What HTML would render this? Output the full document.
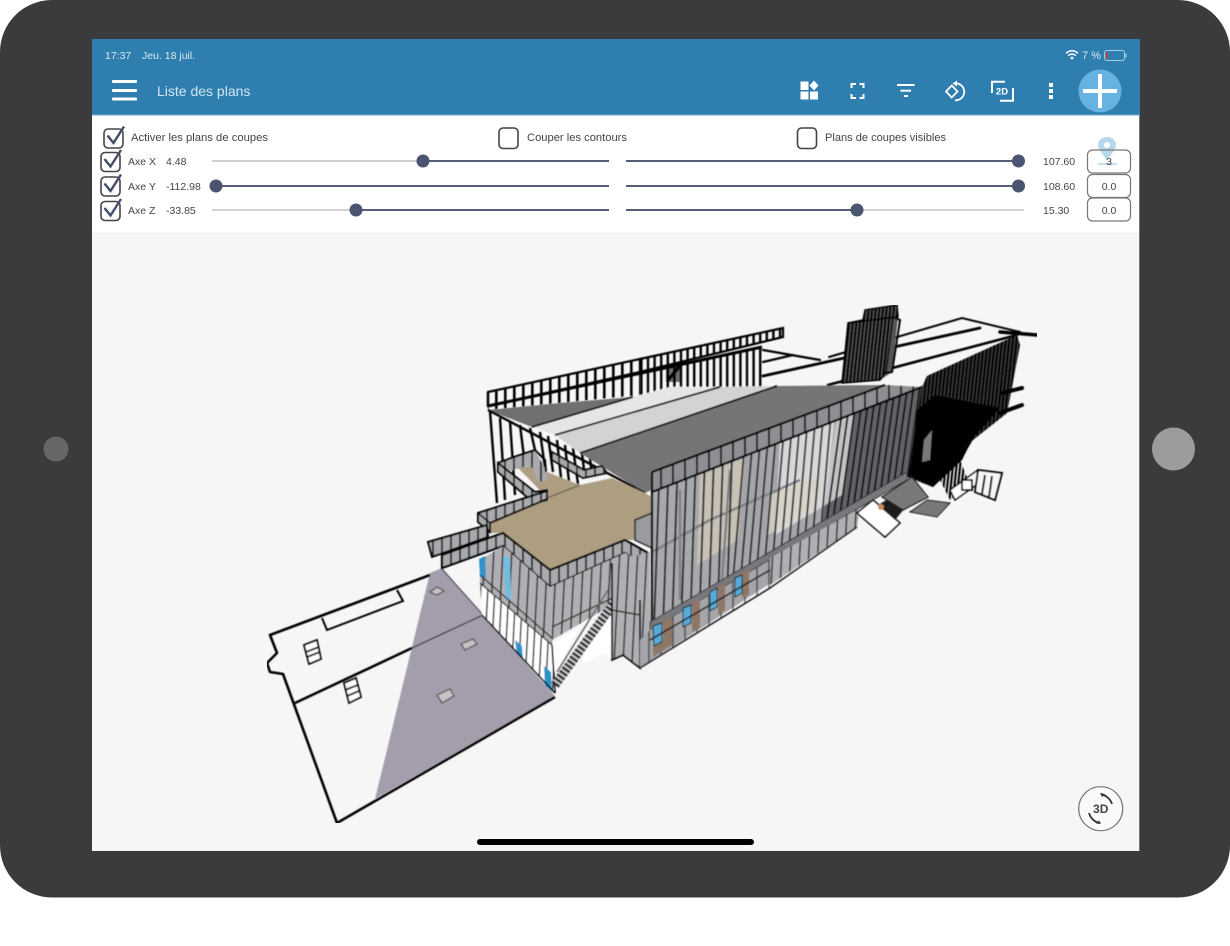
<!DOCTYPE html>
<html lang="fr"><head><meta charset="utf-8"><title>Liste des plans</title>
<style>
html,body{margin:0;padding:0;background:#fff;width:1230px;height:946px;overflow:hidden}
svg{display:block;position:absolute;left:0;top:0}
text{font-family:"Liberation Sans",sans-serif}
</style></head><body>
<svg width="1230" height="946" viewBox="0 0 1230 946" xmlns="http://www.w3.org/2000/svg">
<defs>
<pattern id="b13" width="9" height="20" patternUnits="userSpaceOnUse" patternTransform="skewX(-2)"><rect x="0" width="1.800" height="20" fill="#1c1c1e"/></pattern>
<pattern id="b10" width="7.600" height="20" patternUnits="userSpaceOnUse" patternTransform="skewX(-5)"><rect x="0" width="1.700" height="20" fill="#1c1c1e"/></pattern>
<pattern id="b8" width="6.200" height="20" patternUnits="userSpaceOnUse" patternTransform="skewX(-8)"><rect x="0" width="1.900" height="20" fill="#111"/></pattern>
<pattern id="f9" width="9" height="20" patternUnits="userSpaceOnUse"><rect x="0" width="2.600" height="20" fill="#000"/></pattern>
<pattern id="f7" width="6.600" height="20" patternUnits="userSpaceOnUse"><rect x="0" width="2.400" height="20" fill="#000"/></pattern>
<pattern id="d4" width="3.600" height="20" patternUnits="userSpaceOnUse" patternTransform="skewX(-6)"><rect x="0" width="2.200" height="20" fill="#000"/></pattern>
<pattern id="g12" width="12" height="20" patternUnits="userSpaceOnUse"><rect x="0" width="2" height="20" fill="#222"/></pattern>
<pattern id="w9" width="7" height="20" patternUnits="userSpaceOnUse" patternTransform="skewX(-3)"><rect width="7" height="20" fill="#fff"/><rect x="0" width="1.500" height="20" fill="#333"/></pattern>
<pattern id="c9" width="9" height="20" patternUnits="userSpaceOnUse"><rect width="9" height="20" fill="#a9aaae"/><rect x="0" width="2" height="20" fill="#333"/></pattern>
<pattern id="l6" width="9" height="20" patternUnits="userSpaceOnUse" patternTransform="skewX(-3)"><rect width="9" height="20" fill="#b0b0b4"/><rect x="0" width="1.500" height="20" fill="#2c2c2e"/></pattern>
<filter id="soft" x="0" y="0" width="100%" height="100%"><feGaussianBlur stdDeviation="0.5"/></filter>
<g id="tick"><rect x="0" y="0" width="19" height="19" rx="4" fill="none" stroke="#444" stroke-width="1.600"/><path d="M3.500 6.500L9.500 14L20 -2.500" fill="none" stroke="#434c68" stroke-width="2.400"/></g>
</defs>

<!-- device -->
<rect x="0" y="0" width="1230" height="897.500" rx="52" fill="#3b3b3d"/>
<circle cx="56" cy="449" r="12.500" fill="#666668"/>
<circle cx="1173.500" cy="449" r="21.500" fill="#9c9c9e"/>

<!-- screen -->
<rect x="92" y="39" width="1048" height="812" fill="#f6f6f6"/>
<rect x="1139" y="115" width="1" height="736" fill="#777"/>
<rect x="92" y="39" width="1048" height="76" fill="#2e7eb0"/>
<rect x="92" y="114.500" width="1048" height="1" fill="#6fa9cd"/>
<rect x="92" y="115.500" width="1047" height="117" fill="#fff"/>

<!-- status bar -->
<text x="105" y="59" font-size="10.500" fill="#dceaf3">17:37</text>
<text x="142" y="59" font-size="10.500" fill="#dceaf3">Jeu. 18 juil.</text>
<g fill="none" stroke="#fff" stroke-linecap="round">
<path d="M1066.500 53A8 8 0 0 1 1077.500 53" stroke-width="1.500"/>
<path d="M1068.700 55.300A5 5 0 0 1 1075.300 55.300" stroke-width="1.500"/>
</g>
<circle cx="1072" cy="58" r="1.400" fill="#fff"/>
<text x="1082" y="59" font-size="11" fill="#dceaf3">7 %</text>
<rect x="1104.500" y="50.500" width="20" height="10" rx="2.500" fill="none" stroke="#a9cbe0" stroke-width="1"/>
<rect x="1106" y="52" width="1.800" height="7" fill="#c9413f"/>
<rect x="1125.300" y="53.500" width="1.200" height="4" fill="#a9cbe0"/>

<!-- toolbar -->
<rect x="112" y="80" width="25" height="3" rx="1" fill="#fff"/>
<rect x="112" y="89" width="25" height="3" rx="1" fill="#fff"/>
<rect x="112" y="97.500" width="25" height="3" rx="1" fill="#fff"/>
<text x="157" y="96" font-size="14" fill="#d3e5f0">Liste des plans</text>

<g fill="#fff">
<rect x="800.500" y="81.500" width="8" height="8.500"/>
<path d="M814 80.500L818.500 85.500L814 90.500L809.500 85.500Z"/>
<rect x="800.500" y="91.500" width="8" height="8"/>
<rect x="810" y="91.500" width="8" height="8"/>
</g>
<path d="M851.500 88V84H856M859.500 84H863.500V88M863.500 94V98H859.500M856 98H851.500V94" fill="none" stroke="#fff" stroke-width="2"/>
<g fill="#fff">
<rect x="897" y="84" width="17.500" height="2"/>
<rect x="900.500" y="89.700" width="10.500" height="2"/>
<rect x="904" y="95" width="4" height="2"/>
</g>
<path d="M951.700 85.500L957.500 91.500L951.700 97.500L946 91.500Z" fill="none" stroke="#fff" stroke-width="1.800"/>
<path d="M954 83.500A8.500 8.500 0 1 1 955 100.300" fill="none" stroke="#fff" stroke-width="1.800"/>
<path d="M957 80.500L952.500 83.500L957 86.500Z" fill="#fff"/>
<path d="M992 93V81.800H1005M1000 100.800H1013V88" fill="none" stroke="#fff" stroke-width="2"/>
<text x="1002" y="94.500" font-size="9.500" font-weight="bold" fill="#fff" text-anchor="middle">2D</text>
<g fill="#fff">
<rect x="1049" y="83" width="4" height="4"/>
<rect x="1049" y="89" width="4" height="4"/>
<rect x="1049" y="95" width="4" height="4"/>
</g>
<circle cx="1100" cy="91" r="21.500" fill="#66b2e0"/>
<rect x="1083" y="89" width="34" height="4" fill="#fff"/>
<rect x="1098" y="74" width="4" height="34" fill="#fff"/>

<!-- options -->
<use href="#tick" x="104" y="129"/>
<text x="131" y="141" font-size="11" fill="#444" textLength="137" lengthAdjust="spacingAndGlyphs">Activer les plans de coupes</text>
<rect x="499" y="128" width="19" height="20.500" rx="4" fill="none" stroke="#444" stroke-width="1.600"/>
<text x="527" y="141" font-size="11" fill="#444" textLength="100" lengthAdjust="spacingAndGlyphs">Couper les contours</text>
<rect x="797.500" y="128" width="19" height="20.500" rx="4" fill="none" stroke="#444" stroke-width="1.600"/>
<text x="825" y="141" font-size="11" fill="#444" textLength="121" lengthAdjust="spacingAndGlyphs">Plans de coupes visibles</text>

<use href="#tick" x="101" y="152.500"/>
<use href="#tick" x="101" y="177"/>
<use href="#tick" x="101" y="201.500"/>
<g font-size="10.500" fill="#444">
<text x="128" y="165">Axe X</text><text x="166" y="165">4.48</text>
<text x="128" y="190">Axe Y</text><text x="166" y="190">-112.98</text>
<text x="128" y="214">Axe Z</text><text x="166" y="214">-33.85</text>
<text x="1043" y="165">107.60</text><text x="1043" y="190">108.60</text><text x="1043" y="214">15.30</text>
</g>
<!-- sliders -->
<g stroke="#c4c4c4" stroke-width="1.500">
<line x1="212" y1="161" x2="423" y2="161"/>
<line x1="212" y1="210" x2="356" y2="210"/>
<line x1="857" y1="210" x2="1024" y2="210"/>
</g>
<g stroke="#585f78" stroke-width="2">
<line x1="423" y1="161" x2="609" y2="161"/>
<line x1="216" y1="186" x2="609" y2="186"/>
<line x1="356" y1="210" x2="609" y2="210"/>
<line x1="626" y1="161" x2="1018" y2="161"/>
<line x1="626" y1="186" x2="1018" y2="186"/>
<line x1="626" y1="210" x2="857" y2="210"/>
</g>
<g fill="#4b5572">
<circle cx="423" cy="161" r="6.500"/><circle cx="216" cy="186" r="6.500"/><circle cx="356" cy="210" r="6.500"/>
<circle cx="1018.500" cy="161" r="6.500"/><circle cx="1018.500" cy="186" r="6.500"/><circle cx="857" cy="210" r="6.500"/>
</g>
<!-- pin + inputs -->
<path fill-rule="evenodd" d="M1107 137C1101 137 1098 141 1098 145C1098 150 1104 155 1107 161C1110 155 1116 150 1116 145C1116 141 1113 137 1107 137ZM1107 142A3 3 0 1 1 1106.900 142Z" fill="#b5d8ec"/>
<rect x="1098" y="163" width="19" height="2" fill="#c6e0ef"/>
<g fill="none" stroke="#777" stroke-width="1.200">
<rect x="1087.500" y="150" width="43" height="23" rx="5"/>
<rect x="1087.500" y="174.500" width="43" height="23" rx="5"/>
<rect x="1087.500" y="198" width="43" height="23" rx="5"/>
</g>
<g font-size="10.500" fill="#444" text-anchor="middle">
<text x="1109" y="165">3</text><text x="1109" y="190">0.0</text><text x="1109" y="214">0.0</text>
</g>

<!-- BUILDING -->
<g filter="url(#soft)">
<!-- ground plan -->
<path d="M430 573L442 568L483 615L555 696L375 799Z" fill="#a49dac"/>
<path d="M442 569L483 615" stroke="#3a3640" stroke-width="1" fill="none"/>
<path d="M412 648L483 615" stroke="#26232b" stroke-width="1.200" fill="none"/>
<path d="M430 575L270 635L277 653L267 663L270 672L283 674L337 823L555 697" fill="none" stroke="#000" stroke-width="2.600" stroke-linejoin="round"/>
<path d="M295 703L412 648" fill="none" stroke="#000" stroke-width="2.600"/>
<path d="M322 618L327 630L403 601L397 590" fill="none" stroke="#000" stroke-width="2"/>
<g fill="#fff" stroke="#000" stroke-width="1.800">
<path d="M304 645L317 640L321 659L309 664Z"/>
<path d="M306 652L319 647M307 657L320 652" fill="none"/>
<path d="M344 683L356 678L361 697L349 703Z"/>
<path d="M345 690L358 685M347 696L359 691" fill="none"/>
</g>
<g fill="#c4c2c3" stroke="#4b4850" stroke-width="1.200">
<path d="M430 592L437 587L444 591L437 595Z"/>
<path d="M461 644L473 639L477 644L465 650Z"/>
<path d="M437 695L450 689L454 696L442 703Z"/>
</g>

<!-- back lines -->
<g fill="none" stroke="#000" stroke-linecap="round">
<path d="M829 357L962 318L1020 332" stroke-width="2"/>
<path d="M763 376L980 328" stroke-width="2.800"/>
<path d="M763 350L820 360M763 362L793 355" stroke-width="2.200"/>
<path d="M828 385L1017 335" stroke-width="2.600"/>
<path d="M1000 332L1037 335" stroke-width="3.500"/>
</g>

<!-- tower -->
<path d="M865 310L897 305L898 317L848 323L863 320Z" fill="#555"/>
<path d="M848 323L898 317L892 372L880 380L842 383Z" fill="#555"/>
<path d="M865 310L897 305L898 317L848 323L863 320Z" fill="url(#d4)" stroke="#000" stroke-width="1.500"/>
<path d="M848 323L893 317L886 372L880 380L842 383Z" fill="url(#d4)" stroke="#000" stroke-width="1.500"/>
<path d="M895 318L900 320L892 372L886 373" fill="none" stroke="#000" stroke-width="2"/>

<!-- upper fence -->
<path d="M488 392L640 359L640 372L488 406Z" fill="url(#f9)" stroke="#000" stroke-width="2.200"/>
<path d="M640 359L783 328L783 337L640 372Z" fill="url(#f7)" stroke="#000" stroke-width="2.200"/>
<path d="M488 406L640 373L640 395L488 410Z" fill="url(#f9)"/>
<path d="M640 373L762 347L762 388L640 395Z" fill="url(#f7)"/>
<path d="M488 406L762 347" stroke="#000" stroke-width="3" fill="none"/>
<path d="M666 366L680 363V382H666Z" fill="#000" opacity=".55"/>
<path d="M668 380L680 366" stroke="#000" stroke-width="3"/>

<!-- bars below roof -->
<g stroke="#000" stroke-width="2.400" fill="none">
<path d="M490 411L497 503M500 418L505 500M510 421L515 495M520 425L525 465M530 428L535 450M540 432L545 468M548 436L553 472M557 440L561 478M565 445L569 482M573 448L578 484M582 453L585 478M590 458L592 476"/>
<path d="M488 406V392"/>
</g>

<!-- roof -->
<path d="M488 410L532 427L633 397L560 403Z" fill="#6f6f72"/>
<path d="M532 427L555 435L720 387L670 387L633 397Z" fill="#e6e6e8"/>
<path d="M555 435L580 453L777 386L720 387Z" fill="#d3d3d6"/>
<path d="M580 453L645 493L885 385L777 386Z" fill="#757577"/>
<path d="M488 410L645 493" stroke="#000" stroke-width="2.400" fill="none"/>
<path d="M532 427L633 397M555 435L720 387M580 453L777 386" stroke="#000" stroke-width="1.800" fill="none"/>

<!-- rear side rail -->
<path d="M552 460L583 478L607 473L602 466L584 470L552 452Z" fill="url(#c9)" stroke="#000" stroke-width="1.800"/>

<!-- deck -->
<path d="M517 467L538 466L547 472L580 485L612 478L645 493L652 497L652 513L635 520L635 540L625 540L550 570L503 533L490 533L490 523L547 498L530 480Z" fill="#ad9e82"/>
<path d="M547 498L580 485" stroke="#5a5344" stroke-width="1" fill="none"/>
<path d="M635 520L652 513V548L635 540Z" fill="#9a9b9e" stroke="#222" stroke-width="1.500"/>

<!-- terrace railing -->
<path d="M498 462L535 450L547 472L547 480L538 482L533 468L527 466L498 474Z" fill="url(#c9)"/>
<path d="M498 463L514 457L535 450L545 460L546 472" fill="none" stroke="#000" stroke-width="2"/>
<path d="M498 463L535 492L547 490L547 500L534 503L498 472Z" fill="url(#c9)" stroke="#000" stroke-width="2"/>
<path d="M547 491L478 513L478 522L490 532L490 523L547 499Z" fill="url(#c9)" stroke="#000" stroke-width="2"/>
<path d="M478 513L490 523" stroke="#000" stroke-width="1.500"/>
<!-- canopy left -->
<path d="M428 542L487 525L488 537L432 557Z" fill="url(#c9)" stroke="#000" stroke-width="2"/>
<path d="M442 555L503 533L550 570L625 540L648 553L648 568L635 560L625 553L550 587L503 546L442 568Z" fill="url(#c9)" stroke="#000" stroke-width="2.200"/>

<!-- left wall -->
<path d="M480 560L503 546L550 587L552 645L480 583Z" fill="url(#l6)"/>
<path d="M480 583L552 645L555 693L482 615Z" fill="url(#w9)"/>
<g fill="#2f93cb">
<path d="M479 559L485 556L486 578L480 576Z"/>
<path d="M503 556L510 558L511 603L506 597Z" fill="#6fbde4"/>
<path d="M515 640L522 646L523 660L517 654Z"/>
<path d="M544 666L551 672L552 692L545 685Z"/>
</g>
<path d="M480 583L552 645M480 575L552 638" stroke="#222" stroke-width="1.200" fill="none"/>
<path d="M482 615L555 693M552 645L555 693" stroke="#000" stroke-width="1.600" fill="none"/>

<!-- centre wall -->
<path d="M550 587L625 553L640 560L640 610L614 604L552 640Z" fill="url(#l6)"/>
<path d="M552 627L625 592" stroke="#333" stroke-width="1.500" fill="none"/>
<path d="M553 643L580 627L555 672Z" fill="#fff"/>
<path d="M613 610L612 660L603 653L583 663L584 640Z" fill="#fff"/>
<line x1="557" y1="672" x2="608" y2="590" stroke="#666" stroke-width="1.500"/>
<line x1="555" y1="685" x2="614" y2="603" stroke="#c8c8cc" stroke-width="9"/>
<line x1="555" y1="685" x2="614" y2="603" stroke="#26262c" stroke-width="9" stroke-dasharray="2.400 2"/>
<path d="M612 563L650 552L650 628L640 668L623 655L612 660Z" fill="url(#l6)"/>
<path d="M612 563V660L623 655L640 668V600" fill="none" stroke="#111" stroke-width="1.800"/>
<path d="M612 610L640 615" stroke="#333" stroke-width="1.500"/>

<!-- facade -->
<path d="M652 492L740 458L732 578L650 625Z" fill="#a8a9ad"/>
<path d="M740 458L835 421L822 526L732 578Z" fill="#a5a6aa"/>
<path d="M835 421L922 387L907 477L822 526Z" fill="#626367"/>
<path d="M700 475L745 458L738 540L697 565Z" fill="#cfc7b6" opacity=".8"/>
<path d="M780 440L855 412L842 495L775 535Z" fill="#eeeeee" opacity=".7"/>
<path d="M770 495L822 475L818 505L768 535Z" fill="#d9d2c4" opacity=".8"/>
<path d="M652 552L710 520L800 480M680 490V600M730 470L722 580" stroke="#808186" stroke-width="2.500" fill="none"/>
<path d="M652 492L740 458L732 578L650 625Z" fill="url(#b13)"/>
<path d="M740 458L835 421L822 526L732 578Z" fill="url(#b10)"/>
<path d="M835 421L922 387L907 477L822 526Z" fill="url(#b8)"/>
<!-- parapet -->
<path d="M652 472L885 385L922 387L652 492Z" fill="#8e8f93"/>
<path d="M652 472L885 385L922 387L652 492Z" fill="url(#g12)"/>
<path d="M652 472L885 385M652 492L922 387M652 472V625" stroke="#000" stroke-width="2.200" fill="none"/>
<path d="M922 387L907 477" stroke="#444" stroke-width="1.500"/>
<!-- band -->
<path d="M650 622L907 472L907 480L650 630Z" fill="#77787b" stroke="#333" stroke-width="1"/>

<!-- lower facade -->
<path d="M650 630L860 508L857 527L640 668L640 640Z" fill="#a5a6a9"/>
<path d="M650 630L770 560V588L640 668V640Z" fill="url(#g12)" opacity=".5"/>
<path d="M770 558L860 508L857 527L770 585Z" fill="url(#l6)"/>
<g fill="#8f7768">
<path d="M663 620L672 617L672 645L663 648Z"/><path d="M692 602L700 598L700 628L692 632Z"/>
<path d="M718 587L725 583L725 610L718 615Z"/><path d="M742 572L749 568L749 595L742 598Z"/>
<path d="M653 646L672 636L672 645L653 657Z"/>
</g>
<g fill="#56acd9" stroke="#1a1a1a" stroke-width="1">
<path d="M653 626L662 623L662 642L654 646Z"/><path d="M683 608L691 605L691 623L683 627Z"/>
<path d="M710 592L717 588L717 607L710 611Z"/><path d="M735 578L742 575L742 593L735 597Z"/>
</g>
<path d="M640 668L770 588L857 527M650 640L770 570" fill="none" stroke="#222" stroke-width="1.600"/>

<!-- right end mass -->
<path d="M922 387L927 376L1017 335L1020 345L1007 413L973 440L960 460L933 487L907 477Z" fill="#3a3a3a"/>
<path d="M922 387L927 376L1017 335L1020 345L1007 413L973 440L960 460L933 487L907 477Z" fill="url(#d4)"/>
<path d="M917 410L935 395L960 400L1000 408L973 438L962 460L933 487L910 476Z" fill="#000"/>
<path d="M924 440L932 430L930 460L922 462Z" fill="#ddd" opacity=".55"/>
<path d="M1002 393L1022 388M1000 413L1022 405" stroke="#000" stroke-width="4" stroke-linecap="round"/>
<path d="M945 465L960 460L970 485L950 500L940 480Z" fill="url(#d4)"/>

<!-- small end parts -->
<path d="M857 513L873 500L900 523L885 537Z" fill="#fff" stroke="#000" stroke-width="1.600"/>
<path d="M878 505L895 520L905 508L895 495Z" fill="#1a1a1a"/>
<circle cx="881" cy="507" r="3" fill="#c98e5b"/>
<path d="M912 477L928 497L903 510L882 497Z" fill="#77787a" stroke="#111" stroke-width="1.200"/>
<path d="M927 500L950 503L937 517L910 512Z" fill="#77787a" stroke="#111" stroke-width="1"/>
<path d="M950 490L978 470L983 480L955 500Z" fill="#fff" stroke="#000" stroke-width="1.500"/>
<path d="M978 470L1002 473L995 500L975 492Z" fill="#f6f6f6" stroke="#000" stroke-width="2"/>
<path d="M985 475L982 494M992 476L989 497" stroke="#000" stroke-width="2"/>
<path d="M962 480H972V490H962Z" fill="#fff" stroke="#000" stroke-width="1.800"/>
</g>

<!-- 3D button -->
<circle cx="1100.700" cy="808.700" r="22" fill="#fafafa" stroke="#777" stroke-width="1.200"/>
<text x="1100.700" y="813" font-size="12" font-weight="bold" fill="#444" text-anchor="middle">3D</text>
<path d="M1102 794.500A14.500 14.500 0 0 1 1112 804" fill="none" stroke="#333" stroke-width="1.800"/>
<path d="M1099 823A14.500 14.500 0 0 1 1089 813" fill="none" stroke="#333" stroke-width="1.800"/>
<path d="M1100 793L1105 794L1102 797Z M1101 824L1096 823.500L1099 820.500Z" fill="#333"/>

<!-- home bar -->
<rect x="477" y="839" width="277" height="6" rx="3" fill="#000"/>
</svg>
</body></html>
